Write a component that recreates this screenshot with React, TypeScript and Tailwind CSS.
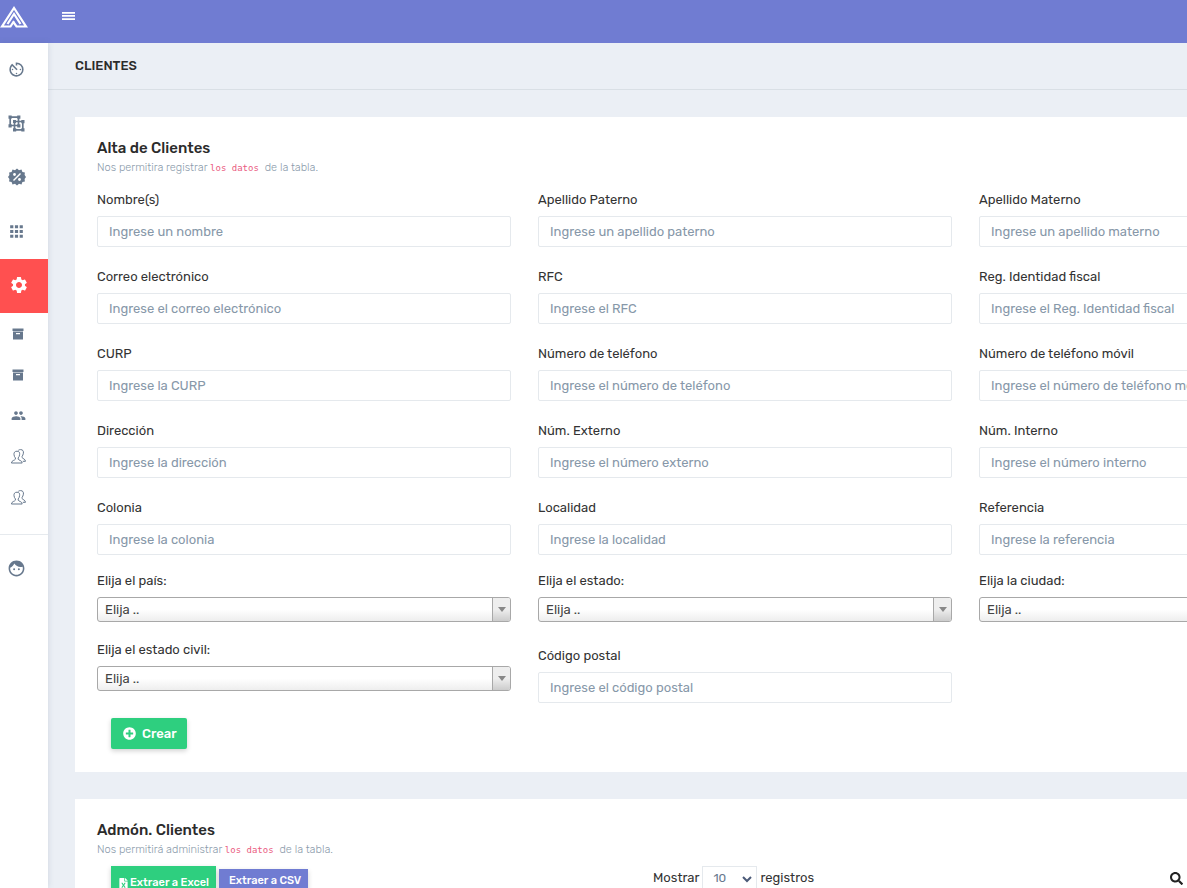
import type { ReactNode } from 'react';
import { MdApps, MdAvTimer, MdFace, MdPeople, MdSettings } from 'react-icons/md';
import { FaFileExcel, FaPlusCircle, FaSearch } from 'react-icons/fa';

function Logo() {
  return (
    <svg width="28" height="24" viewBox="0 0 28 24" fill="none" stroke="#fff" strokeWidth="2.2">
      <path d="M14 16L10.500 21.500H2L14 3L26 21.500H16.500L13 16.500" />
      <path d="M7.500 19L14 9L20.500 19" />
    </svg>
  );
}

function MenuIcon() {
  return (
    <svg width="13" height="8" viewBox="0 0 13 8" fill="currentColor">
      <path d="M0 0h13v1.700H0zM0 3.100h13v1.700H0zM0 6.300h13V8H0z" />
    </svg>
  );
}

function GroupIcon() {
  return (
    <svg width="17" height="17" viewBox="0 0 17 17" fill="none" stroke="currentColor">
      <path d="M2.200 2.200h8.300v8.300H2.200zM6.500 6.500h8.300v8.300H6.500z" strokeWidth="1.700" />
      <path
        d="M.5.5h3.200v3.200H.5zM9.200.5h3.200v3.200H9.200zM.5 9.200h3.200v3.200H.5zM9.200 9.200h3.200v3.200H9.200zM5 5h3v3H5zM13.300 5h3.200v3.200h-3.200zM5 13.300h3.200v3.200H5zM13.300 13.300h3.200v3.200h-3.200z"
        fill="currentColor"
        stroke="none"
      />
    </svg>
  );
}

function DiscountIcon() {
  return (
    <svg width="18" height="18" viewBox="0 0 18 18">
      <path
        fill="currentColor"
        d="M9 .5l2 1.700 2.500-.700.9 2.400 2.500.6-.3 2.600L18 9l-1.400 1.900.3 2.600-2.500.6-.9 2.400-2.500-.7L9 17.500l-2-1.700-2.500.7-.9-2.400-2.500-.6.3-2.600L0 9l1.400-1.900-.3-2.600 2.500-.6.9-2.400 2.500.7z"
      />
      <path d="M5.500 12.500l7-7" stroke="#fff" strokeWidth="1.500" />
      <circle cx="6.500" cy="6.500" r="1.400" fill="#fff" />
      <circle cx="11.500" cy="11.500" r="1.400" fill="#fff" />
    </svg>
  );
}

function ArchiveIcon() {
  return (
    <svg width="12" height="12" viewBox="0 0 12 12" fill="currentColor">
      <path d="M.5 0.500h11v2.500H.5z" />
      <path fillRule="evenodd" d="M1 3.500h10v8H1zM4 5v1.300h4V5z" />
    </svg>
  );
}

function ContactsIcon() {
  return (
    <svg width="15" height="15" viewBox="0 0 15 15" fill="none" stroke="currentColor" strokeWidth="1">
      <path d="M6 2.200c-2.400 0-3.200 1.500-3 3.500.1 1.500.8 2.500 1.400 3.200v1.300c-.5 1.200-3.700 1-4 3.800h10.800c-.3-2.800-3.500-2.600-4-3.800V8.900c.6-.7 1.300-1.700 1.400-3.200C8.800 3.700 8.400 2.200 6 2.200z" />
      <path d="M7.300 1.300C8 .8 8.700.6 9.500.6c2.400 0 3.200 1.500 2.900 3.600-.2 1.500-.8 2.400-1.300 3.100v1.300c.6 1.100 3.100 1.200 3.400 3.700h-2.700" />
    </svg>
  );
}

const MAIN_NAV: { label: string; icon: ReactNode; active?: boolean }[] = [
  { label: 'Tablero', icon: <MdAvTimer size={19} /> },
  { label: 'Grupos', icon: <GroupIcon /> },
  { label: 'Descuentos', icon: <DiscountIcon /> },
  { label: 'Aplicaciones', icon: <MdApps size={19} /> },
  { label: 'Configuración', icon: <MdSettings size={20} />, active: true },
];

const SUB_NAV: { label: string; icon: ReactNode }[] = [
  { label: 'Almacén', icon: <ArchiveIcon /> },
  { label: 'Inventario', icon: <ArchiveIcon /> },
  { label: 'Usuarios', icon: <MdPeople size={15} /> },
  { label: 'Clientes', icon: <ContactsIcon /> },
  { label: 'Proveedores', icon: <ContactsIcon /> },
];

const FIELDS: { id: string; label: string; placeholder: string }[] = [
  { id: 'nombre', label: 'Nombre(s)', placeholder: 'Ingrese un nombre' },
  { id: 'paterno', label: 'Apellido Paterno', placeholder: 'Ingrese un apellido paterno' },
  { id: 'materno', label: 'Apellido Materno', placeholder: 'Ingrese un apellido materno' },
  { id: 'correo', label: 'Correo electrónico', placeholder: 'Ingrese el correo electrónico' },
  { id: 'rfc', label: 'RFC', placeholder: 'Ingrese el RFC' },
  { id: 'fiscal', label: 'Reg. Identidad fiscal', placeholder: 'Ingrese el Reg. Identidad fiscal' },
  { id: 'curp', label: 'CURP', placeholder: 'Ingrese la CURP' },
  { id: 'telefono', label: 'Número de teléfono', placeholder: 'Ingrese el número de teléfono' },
  { id: 'movil', label: 'Número de teléfono móvil', placeholder: 'Ingrese el número de teléfono móvil' },
  { id: 'direccion', label: 'Dirección', placeholder: 'Ingrese la dirección' },
  { id: 'externo', label: 'Núm. Externo', placeholder: 'Ingrese el número externo' },
  { id: 'interno', label: 'Núm. Interno', placeholder: 'Ingrese el número interno' },
  { id: 'colonia', label: 'Colonia', placeholder: 'Ingrese la colonia' },
  { id: 'localidad', label: 'Localidad', placeholder: 'Ingrese la localidad' },
  { id: 'referencia', label: 'Referencia', placeholder: 'Ingrese la referencia' },
];

function TextField({ id, label, placeholder }: { id: string; label: string; placeholder: string }) {
  return (
    <div className="flex flex-col gap-[7px]">
      <label htmlFor={id} className="leading-[18px]">{label}</label>
      <input
        id={id}
        type="text"
        placeholder={placeholder}
        className="h-[31px] w-full rounded-xs border border-[#e5e9ed] bg-white px-[11px] placeholder:text-[#8798a9] focus:outline-none"
      />
    </div>
  );
}

function SelectField({ id, label }: { id: string; label: string }) {
  return (
    <div className="flex flex-col gap-[7px]">
      <label htmlFor={id} className="leading-[18px]">{label}</label>
      <div className="relative">
        <select
          id={id}
          className="block h-[25px] w-full appearance-none rounded-[3px] border border-[#a8a8a8] bg-linear-to-b from-white from-50% to-[#eeeeee] pt-px pr-6 pl-[7px] text-[#444]"
        >
          <option>Elija ..</option>
        </select>
        <span className="pointer-events-none absolute inset-y-px right-px flex w-[18px] items-center justify-center rounded-r-xs border-l border-[#a8a8a8] bg-linear-to-b from-[#eeeeee] from-50% to-[#cccccc]">
          <span className="border-x-4 border-t-[5px] border-x-transparent border-t-[#888]" />
        </span>
      </div>
    </div>
  );
}

function CardHeading({ title, intro }: { title: string; intro: string }) {
  return (
    <div>
      <h2 className="text-[15px] leading-5 font-medium text-[#2b2b2b]">{title}</h2>
      <p className="text-[11px] leading-5 font-light text-[#8b9bab]">
        {intro}{' '}
        <code className="mr-[3px] font-['DejaVu_Sans_Mono','Liberation_Mono',monospace] text-[9px] font-normal text-[#ea5b81]">
          los datos
        </code>{' '}
        de la tabla.
      </p>
    </div>
  );
}

function Sidebar() {
  return (
    <nav className="relative z-10 w-12 shrink-0 bg-white text-[#67788d] shadow-[0_0_6px_rgba(80,100,130,0.18)]">
      {MAIN_NAV.map(({ label, icon, active }) => (
        <a
          key={label}
          href="#"
          aria-label={label}
          className={`flex h-[54px] items-center pb-[2px] ${active ? 'bg-[#ff5050] pl-[9px] text-white' : 'w-[33px] justify-center'}`}
        >
          {icon}
        </a>
      ))}
      <div className="border-b border-[#e6eaee] pb-4">
        {SUB_NAV.map(({ label, icon }) => (
          <a key={label} href="#" aria-label={label} className="flex h-[41px] w-9 items-center justify-center">
            {icon}
          </a>
        ))}
      </div>
      <a href="#" aria-label="Perfil" className="flex h-[66px] w-[33px] items-center justify-center">
        <MdFace size={19} />
      </a>
    </nav>
  );
}

export default function App() {
  return (
    <div className="flex h-screen flex-col overflow-hidden bg-[#ebeff5] font-['Rubik','Roboto',sans-serif] text-[13px] text-[#333]">
      <header className="flex h-[43px] shrink-0 items-start bg-[#707cd2] text-white">
        <a href="#" aria-label="Inicio" className="w-12 pt-[5px]">
          <Logo />
        </a>
        <button type="button" aria-label="Menú" className="ml-[14px] pt-3">
          <MenuIcon />
        </button>
      </header>

      <div className="flex min-h-0 flex-1">
        <Sidebar />
        <main className="min-w-0 flex-1 overflow-hidden">
          <div className="border-b border-[#d9dfe5] py-[13px] pl-[27px]">
            <h1 className="text-[13px] leading-5 font-medium text-[#2b2b2b] uppercase">Clientes</h1>
          </div>

          <div className="flex min-w-[1394px] flex-col gap-[27px] p-[27px]">
            <section className="bg-white px-[22px] pt-[21px] pb-[23px]">
              <CardHeading title="Alta de Clientes" intro="Nos permitira registrar" />
              <form className="mt-[13px]">
                <div className="grid grid-cols-3 gap-x-[27px] gap-y-[21px]">
                  {FIELDS.map((f) => (
                    <TextField key={f.id} {...f} />
                  ))}
                </div>
                <div className="mt-[17px] grid grid-cols-3 gap-x-[27px] gap-y-[19px]">
                  <SelectField id="pais" label="Elija el país:" />
                  <SelectField id="estado" label="Elija el estado:" />
                  <SelectField id="ciudad" label="Elija la ciudad:" />
                  <SelectField id="civil" label="Elija el estado civil:" />
                  <div className="pt-[6px]">
                    <TextField id="postal" label="Código postal" placeholder="Ingrese el código postal" />
                  </div>
                </div>
                <button
                  type="button"
                  className="mt-[15px] ml-[14px] flex h-[31px] items-center gap-[6px] rounded-xs bg-[#2ecf7f] pr-[10px] pl-3 font-medium text-white shadow-[0_2px_5px_rgba(0,0,0,0.18)]"
                >
                  <FaPlusCircle size={13} />
                  Crear
                </button>
              </form>
            </section>

            <section className="bg-white px-[22px] pt-[21px] pb-6">
              <CardHeading title="Admón. Clientes" intro="Nos permitirá administrar" />
              <div className="mt-[6px] flex">
                <div className="flex w-[556px] items-start gap-[3px] pl-[14px]">
                  <button
                    type="button"
                    className="flex h-[34px] items-center gap-px bg-[#2ecf7f] px-[7px] text-[11px] font-medium text-white shadow-[0_2px_5px_rgba(0,0,0,0.18)]"
                  >
                    <FaFileExcel size={11} />
                    Extraer a Excel
                  </button>
                  <button
                    type="button"
                    className="mt-[3px] h-6 bg-[#707cd2] pr-[7px] pl-[10px] text-[11px] font-medium text-white shadow-[0_2px_5px_rgba(0,0,0,0.18)]"
                  >
                    Extraer a CSV
                  </button>
                </div>
                <div className="flex h-6 items-center gap-[3px]">
                  <label htmlFor="registros">Mostrar</label>
                  <span className="relative">
                    <select
                      id="registros"
                      className="block h-6 w-[55px] appearance-none border border-[#e5e9ed] bg-white pl-[10px] text-[12px] text-[#67788d]"
                    >
                      <option>10</option>
                    </select>
                    <svg className="pointer-events-none absolute top-[10px] right-[5px]" width="10" height="7" viewBox="0 0 10 7">
                      <path d="M1 1l4 4 4-4" fill="none" stroke="#4b5a78" strokeWidth="2" />
                    </svg>
                  </span>
                  <span>registros</span>
                </div>
                <button type="button" aria-label="Buscar" className="ml-[356px] flex h-6 items-center text-[#222]">
                  <FaSearch size={13} />
                </button>
              </div>
            </section>
          </div>
        </main>
      </div>
    </div>
  );
}
